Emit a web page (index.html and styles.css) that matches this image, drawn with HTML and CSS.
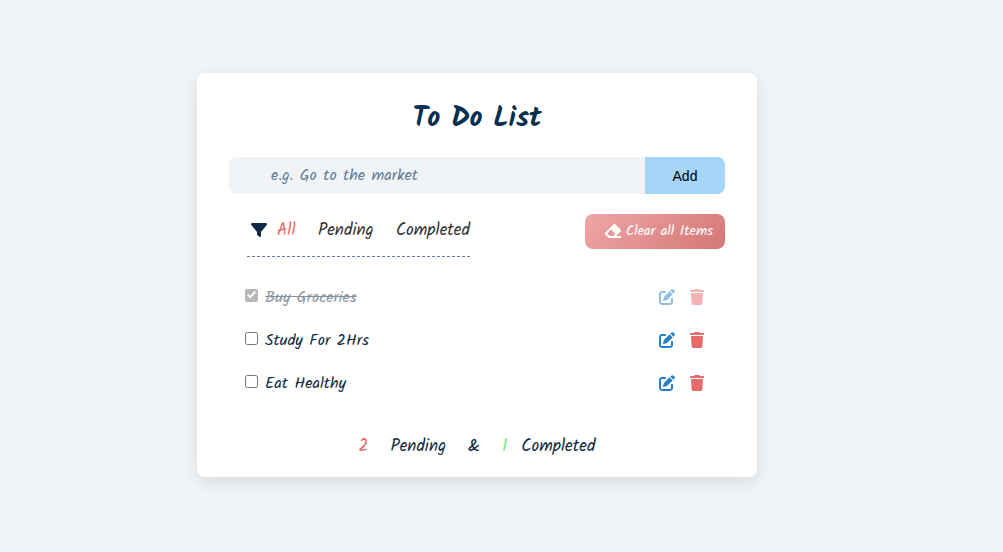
FILE: index.html
```html
<!DOCTYPE html>
<html lang="en">
<head>
<meta charset="utf-8">
<meta name="viewport" content="width=device-width, initial-scale=1">
<title>To Do List</title>
<link rel="stylesheet" href="styles.css">
</head>
<body>
<svg class="sprite" aria-hidden="true">
  <symbol id="filter" viewBox="0 0 512 512"><path d="M3.9 54.9C10.5 40.9 24.5 32 40 32H472c15.5 0 29.5 8.9 36.1 22.9s4.6 30.5-5.2 42.5L320 320.9V448c0 12.1-6.8 23.2-17.7 28.6s-23.8 4.3-33.5-3l-64-48c-8.1-6-12.8-15.5-12.8-25.6V320.9L9 97.3C-.7 85.4-2.8 68.8 3.9 54.9z"/></symbol>
  <symbol id="eraser" viewBox="0 0 512 512"><path d="M497.941 273.941c18.745-18.745 18.745-49.137 0-67.882l-160-160c-18.745-18.745-49.136-18.746-67.883 0l-256 256c-18.745 18.745-18.745 49.137 0 67.882l96 96A48.004 48.004 0 0 0 144 480h356c6.627 0 12-5.373 12-12v-40c0-6.627-5.373-12-12-12H355.883l142.058-142.059zm-302.627-62.627l137.373 137.373L265.373 416H150.628l-80-80 124.686-124.686z"/></symbol>
  <symbol id="edit" viewBox="0 0 512 512"><path d="M471.6 21.7c-21.9-21.9-57.3-21.9-79.2 0L362.3 51.7l97.9 97.9 30.1-30.1c21.9-21.9 21.9-57.3 0-79.2L471.6 21.7zm-299.2 220c-6.1 6.1-10.8 13.6-13.5 21.9l-29.6 88.8c-2.9 8.6-.6 18.1 5.8 24.6s15.9 8.7 24.6 5.8l88.8-29.6c8.2-2.7 15.7-7.4 21.9-13.5L437.7 172.3 339.7 74.3 172.4 241.7zM96 64C43 64 0 107 0 160V416c0 53 43 96 96 96H352c53 0 96-43 96-96V320c0-17.7-14.3-32-32-32s-32 14.3-32 32v96c0 17.7-14.3 32-32 32H96c-17.7 0-32-14.3-32-32V160c0-17.7 14.3-32 32-32h96c17.7 0 32-14.3 32-32s-14.3-32-32-32H96z"/></symbol>
  <symbol id="trash" viewBox="0 0 448 512"><path d="M135.2 17.7L128 32H32C14.3 32 0 46.3 0 64S14.3 96 32 96H416c17.7 0 32-14.3 32-32s-14.3-32-32-32H320l-7.2-14.3C307.4 6.8 296.3 0 284.2 0H163.8c-12.1 0-23.2 6.8-28.6 17.7zM416 128H32L53.2 467c1.6 25.3 22.6 45 47.9 45H346.9c25.3 0 46.3-19.7 47.9-45L416 128z"/></symbol>
</svg>
<main class="card">
  <h1 class="title">To Do List</h1>
  <form class="entry">
    <input class="entry-text" type="text" placeholder="e.g. Go to the market" aria-label="New item">
    <button class="entry-add" type="button">Add</button>
  </form>
  <div class="toolbar">
    <div class="filters">
      <svg class="icon filter-icon" aria-hidden="true"><use href="#filter"/></svg>
      <button class="filter filter-all active" type="button">All</button>
      <button class="filter filter-pending" type="button">Pending</button>
      <button class="filter" type="button">Completed</button>
    </div>
    <button class="clear" type="button"><svg class="icon eraser-icon" aria-hidden="true"><use href="#eraser"/></svg>Clear all Items</button>
  </div>
  <ul class="items">
    <li class="item done">
      <input class="check" type="checkbox" id="item-1" checked disabled>
      <label class="item-name" for="item-1">Buy Groceries</label>
      <button class="action edit" type="button" aria-label="Edit Buy Groceries"><svg class="icon"><use href="#edit"/></svg></button>
      <button class="action delete" type="button" aria-label="Delete Buy Groceries"><svg class="icon"><use href="#trash"/></svg></button>
    </li>
    <li class="item">
      <input class="check" type="checkbox" id="item-2">
      <label class="item-name" for="item-2">Study For 2Hrs</label>
      <button class="action edit" type="button" aria-label="Edit Study For 2Hrs"><svg class="icon"><use href="#edit"/></svg></button>
      <button class="action delete" type="button" aria-label="Delete Study For 2Hrs"><svg class="icon"><use href="#trash"/></svg></button>
    </li>
    <li class="item">
      <input class="check" type="checkbox" id="item-3">
      <label class="item-name" for="item-3">Eat Healthy</label>
      <button class="action edit" type="button" aria-label="Edit Eat Healthy"><svg class="icon"><use href="#edit"/></svg></button>
      <button class="action delete" type="button" aria-label="Delete Eat Healthy"><svg class="icon"><use href="#trash"/></svg></button>
    </li>
  </ul>
  <p class="summary">
    <span class="count pending-count">2</span><span>Pending</span><span>&amp;</span><span class="completed"><span class="completed-count">1</span><span>Completed</span></span>
  </p>
</main>
</body>
</html>
```
FILE: styles.css
```css
* { box-sizing: border-box; }

body {
  margin: 0;
  min-height: 100vh;
  padding: 24px 49px 26px 0;
  display: flex;
  align-items: center;
  justify-content: center;
  background: #f0f4f7;
  color: #102a42;
  font-family: Kalam, Lato, sans-serif;
  font-size: 16px;
}

button, input { font: inherit; color: inherit; }
button { border: 0; padding: 0; background: none; cursor: pointer; }

.sprite { display: none; }
.icon { display: block; width: 16px; height: 16px; fill: currentColor; flex: none; }

.card {
  width: 100%;
  max-width: 560px;
  padding: 26px 32px 13px;
  background: #fff;
  border-radius: 8px;
  box-shadow: 0 5px 15px rgba(0, 0, 0, 0.1);
}

.title {
  margin: 0 0 18px;
  font-size: 28px;
  line-height: 40px;
  font-weight: 700;
  text-align: center;
  color: #053050;
}

.entry { display: flex; height: 37px; margin: 0 0 20px; }
.entry-text {
  flex: 1;
  min-width: 0;
  border: 0;
  padding: 0 16px 0 42px;
  border-radius: 8px 0 0 8px;
  background: #f0f4f7;
}
.entry-text::placeholder { color: #627d98; opacity: 1; }
.entry-add {
  width: 80px;
  border-radius: 0 8px 8px 0;
  background: #a5d5f9;
  color: #000;
  font-family: "Liberation Sans", Arial, sans-serif;
  font-size: 14px;
}

.toolbar { display: flex; justify-content: space-between; align-items: flex-start; }
.filters {
  display: flex;
  align-items: center;
  margin-left: 18px;
  padding: 0 0 10px 4px;
  width: 223px;
  border-bottom: 1px dashed #627d98;
}
.filter { padding-top: 2px; font-size: 17px; line-height: 30px; color: #333; }
.filter-icon { margin-right: 10px; }
.filter-all { width: 41px; text-align: left; }
.filter-pending { width: 78px; text-align: left; }
.filter.active { color: #e66a6a; }

.clear {
  display: flex;
  align-items: center;
  justify-content: flex-end;
  gap: 5px;
  width: 140px;
  height: 35px;
  padding: 0 12px 2px 0;
  border-radius: 8px;
  background: linear-gradient(135deg, #f0a6a6, #d47777);
  color: #fff;
  font-size: 14px;
}

.items { list-style: none; margin: 18px 0 0; padding: 0 21px 0 16px; }
.item { display: flex; align-items: center; height: 43px; }
.check { width: 13px; height: 13px; margin: 0 7px 3px 0; }
.check:disabled {
  appearance: none;
  display: grid;
  place-items: center;
  border-radius: 2px;
  background: #b8b8b8;
}
.check:disabled::before {
  content: "";
  width: 9px;
  height: 9px;
  background: #fff;
  clip-path: polygon(0 52%, 16% 36%, 36% 57%, 84% 6%, 100% 22%, 36% 88%);
}
.item-name { flex: 1; padding-top: 2px; }
.action { width: 16px; }
.edit { color: #2680c8; }
.delete { margin-left: 15px; width: 14px; color: #e66a6a; }
.delete .icon { width: 14px; }
.done .item-name { text-decoration: line-through; opacity: 0.5; }
.done .action { opacity: 0.5; }

.summary {
  display: flex;
  justify-content: center;
  gap: 22px;
  margin: 26px 0 0;
  font-size: 17px;
  line-height: 34px;
}
.completed { display: flex; gap: 14px; }
.pending-count { color: #e66a6a; }
.completed-count { color: #6ee787; }
```
